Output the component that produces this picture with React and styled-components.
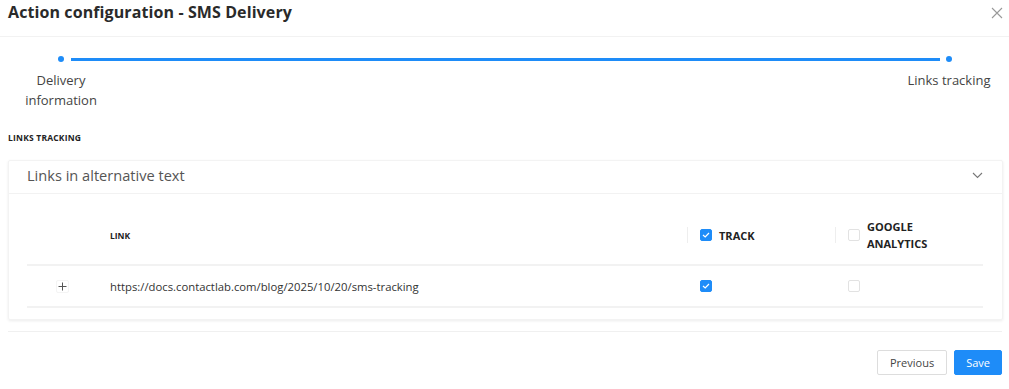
import React from "react";
import styled, { createGlobalStyle } from "styled-components";

const GlobalStyle = createGlobalStyle`
  body {
    margin: 0;
    background: #fff;
    font-family: "Open Sans", "Noto Sans", sans-serif;
    color: #333;
  }
`;

const BLUE = "#1e8cf8";

export default function App() {
  return (
    <>
      <GlobalStyle />
      <Modal>
        <Header>
          <Title>Action configuration - SMS Delivery</Title>
          <Close aria-label="close">
            <svg width="12" height="12" viewBox="0 0 12 12">
              <path d="M1 1L11 11M11 1L1 11" stroke="#999" strokeWidth="1.1" />
            </svg>
          </Close>
        </Header>

        <Stepper>
          <Track>
            <Dot />
            <Line />
            <Dot />
          </Track>
          <Labels>
            <StepLabel>Delivery information</StepLabel>
            <StepLabel>Links tracking</StepLabel>
          </Labels>
        </Stepper>

        <SectionTitle>Links tracking</SectionTitle>

        <Card>
          <CardHeader>
            <CardTitle>Links in alternative text</CardTitle>
            <svg width="11" height="7" viewBox="0 0 11 7">
              <path d="M1 1L5.5 5.5L10 1" stroke="#777" strokeWidth="1.1" fill="none" />
            </svg>
          </CardHeader>

          <Table>
            <HeadRow>
              <Cell />
              <Cell $pad>
                <HeadText>Link</HeadText>
              </Cell>
              <Cell>
                <Divider />
                <Check checked />
                <HeadText $big>Track</HeadText>
              </Cell>
              <Cell>
                <Divider />
                <Check />
                <HeadText $big>Google analytics</HeadText>
              </Cell>
            </HeadRow>
            <BodyRow>
              <Cell $center>
                <PlusBtn aria-label="expand">
                  <svg width="9" height="9" viewBox="0 0 9 9">
                    <path d="M4.5 0.5V8.5M0.5 4.5H8.5" stroke="#555" strokeWidth="1" />
                  </svg>
                </PlusBtn>
              </Cell>
              <Cell $pad>
                <LinkText>https://docs.contactlab.com/blog/2025/10/20/sms-tracking</LinkText>
              </Cell>
              <Cell $pad>
                <Check checked />
              </Cell>
              <Cell $pad>
                <Check />
              </Cell>
            </BodyRow>
          </Table>
        </Card>

        <Footer>
          <Button>Previous</Button>
          <Button $primary>Save</Button>
        </Footer>
      </Modal>
    </>
  );
}

function Check({ checked }) {
  return (
    <Box $checked={checked}>
      {checked && (
        <svg width="8" height="6" viewBox="0 0 8 6">
          <path d="M1 3L3.2 5L7 1" stroke="#fff" strokeWidth="1.2" fill="none" />
        </svg>
      )}
    </Box>
  );
}

const Modal = styled.div`
  width: 1009px;
  height: 389px;
  box-sizing: border-box;
  display: flex;
  flex-direction: column;
`;

const Header = styled.div`
  height: 37px;
  box-sizing: border-box;
  display: flex;
  align-items: flex-start;
  justify-content: space-between;
  padding: 2px 4px 0 8px;
  border-bottom: 1px solid #f2f2f2;
`;

const Title = styled.h1`
  margin: 0;
  font-size: 16px;
  line-height: 20px;
  font-weight: 700;
  letter-spacing: 0.1px;
  color: #2a2a2a;
`;

const Close = styled.button`
  border: none;
  background: none;
  padding: 2px;
  margin-top: 3px;
  cursor: pointer;
  display: flex;
`;

const Stepper = styled.div`
  padding: 19px 7px 0 8px;
`;

const Track = styled.div`
  display: flex;
  align-items: center;
  padding: 0 50px 0 50px;
  height: 6px;
`;

const Dot = styled.span`
  width: 6px;
  height: 6px;
  border-radius: 50%;
  background: ${BLUE};
  flex: none;
`;

const Line = styled.span`
  flex: 1;
  height: 3px;
  margin: 0 6px 0 7px;
  background: ${BLUE};
`;

const Labels = styled.div`
  display: flex;
  justify-content: space-between;
  margin-top: 8px;
`;

const StepLabel = styled.div`
  width: 106px;
  text-align: center;
  font-size: 13px;
  line-height: 20px;
  color: #444;
`;

const SectionTitle = styled.div`
  margin: 23px 0 0 8px;
  font-size: 8.5px;
  line-height: 10px;
  font-weight: 700;
  letter-spacing: 0.2px;
  text-transform: uppercase;
  color: #222;
`;

const Card = styled.div`
  margin: 17px 6px 0 8px;
  border: 1px solid #f3f3f3;
  border-radius: 2px;
  box-shadow: 0 1px 3px rgba(0, 0, 0, 0.08);
  padding-bottom: 11px;
`;

const CardHeader = styled.div`
  height: 33px;
  box-sizing: border-box;
  display: flex;
  align-items: center;
  justify-content: space-between;
  padding: 0 19px 4px 18px;
  border-bottom: 1px solid #f2f2f2;
`;

const CardTitle = styled.div`
  font-size: 14.6px;
  color: #555;
`;

const Table = styled.div`
  padding: 0 19px 0 18px;
`;

const HeadRow = styled.div`
  display: grid;
  grid-template-columns: 70px 1fr 148px 148px;
  height: 72px;
  align-items: center;
  padding-top: 12px;
  box-sizing: border-box;
  border-bottom: 2px solid #f2f2f2;
`;

const BodyRow = styled.div`
  display: grid;
  grid-template-columns: 70px 1fr 148px 148px;
  height: 42px;
  align-items: center;
  box-sizing: border-box;
  border-bottom: 2px solid #f2f2f2;
`;

const Cell = styled.div`
  display: flex;
  align-items: center;
  justify-content: ${(p) => (p.$center ? "center" : "flex-start")};
  padding-left: ${(p) => (p.$pad ? "13px" : "0")};
`;

const Divider = styled.span`
  width: 1px;
  height: 16px;
  background: #eee;
  margin-right: 12px;
  flex: none;
`;

const HeadText = styled.span`
  font-size: ${(p) => (p.$big ? "11px" : "8.5px")};
  line-height: 17px;
  font-weight: 700;
  text-transform: uppercase;
  color: #222;
  margin-left: ${(p) => (p.$big ? "7px" : "0")};
  max-width: 80px;
`;

const Box = styled.span`
  width: 12px;
  height: 12px;
  box-sizing: border-box;
  border-radius: 2px;
  flex: none;
  display: flex;
  align-items: center;
  justify-content: center;
  background: ${(p) => (p.$checked ? BLUE : "#fff")};
  border: 1px solid ${(p) => (p.$checked ? BLUE : "#e2e2e2")};
`;

const PlusBtn = styled.span`
  width: 11px;
  height: 11px;
  display: flex;
  align-items: center;
  justify-content: center;
  border: 1px solid #f4f4f4;
  border-radius: 2px;
`;

const LinkText = styled.span`
  font-size: 11.3px;
  color: #333;
`;

const Footer = styled.div`
  margin: 11px 7px 0 8px;
  border-top: 1px solid #f0f0f0;
  padding-top: 18px;
  display: flex;
  justify-content: flex-end;
  gap: 7px;
`;

const Button = styled.button`
  height: 25px;
  padding: 0 ${(p) => (p.$primary ? "11px" : "12px")};
  font-family: inherit;
  font-size: 11px;
  border-radius: 2px;
  cursor: pointer;
  background: ${(p) => (p.$primary ? BLUE : "#fff")};
  color: ${(p) => (p.$primary ? "#fff" : "#444")};
  border: 1px solid ${(p) => (p.$primary ? BLUE : "#ddd")};
`;
